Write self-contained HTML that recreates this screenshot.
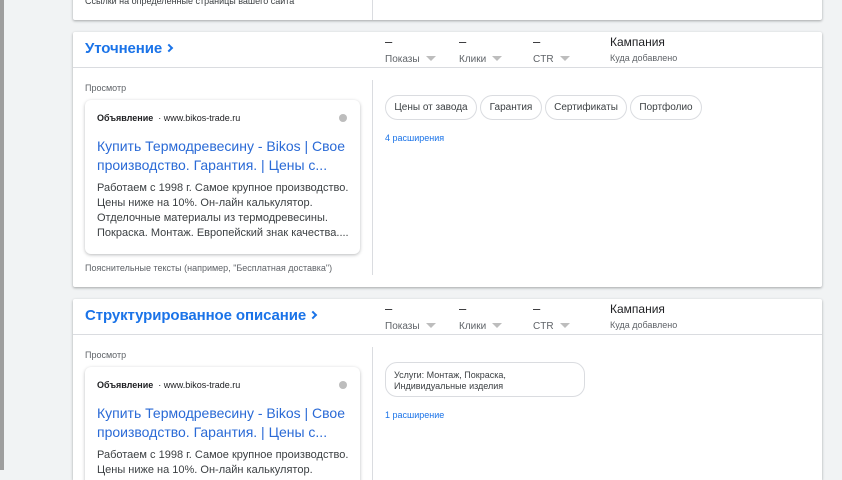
<!DOCTYPE html>
<html><head><meta charset="utf-8"><style>
*{margin:0;padding:0;box-sizing:border-box}
html,body{width:842px;height:480px;overflow:hidden}
body{background:#f1f3f4;font-family:"Liberation Sans",Arial,sans-serif;position:relative;color:#3c4043}
.strip{position:absolute;left:0;top:0;width:4px;height:470px;background:#9e9e9e}
.card{position:absolute;left:73px;width:749px;background:#fff;box-shadow:0 1px 2px rgba(60,64,67,.3),0 1px 3px rgba(60,64,67,.15);border-radius:2px;overflow:hidden}
.ab{position:absolute;white-space:nowrap}
.title{font-size:15px;color:#1a73e8;font-weight:bold;letter-spacing:-.1px}
.chev{display:inline-block;width:6px;height:6px;border-right:2px solid #1a73e8;border-top:2px solid #1a73e8;transform:rotate(45deg);margin-left:4px;vertical-align:2px}
.dash{font-size:13px;color:#202124}
.mh{font-size:10px;color:#5f6368}
.tri{display:inline-block;width:0;height:0;border-left:5px solid transparent;border-right:5px solid transparent;border-top:5px solid #bdbdbd;margin-left:6px;vertical-align:1px}
.hline{position:absolute;left:0;right:0;height:1px;background:#dadce0}
.vline{position:absolute;left:299px;width:1px;background:#dadce0}
.small{font-size:9px;color:#5f6368}
.ad{position:absolute;left:12px;width:275px;border-radius:6px;box-shadow:0 1px 3px rgba(60,64,67,.35);background:#fff}
.ad .lbl{position:absolute;left:12px;top:13px;font-size:9px;color:#202124;white-space:nowrap}
.ad .lbl b{font-weight:bold}
.ad .dot{position:absolute;right:13px;top:14px;width:8px;height:8px;border-radius:50%;background:#bdbdbd}
.ad .h{position:absolute;left:12px;top:37px;font-size:14px;line-height:19px;color:#2a6ad6;width:260px}
.ad .d{position:absolute;left:12px;top:81px;font-size:11px;line-height:15px;color:#3c4043;width:262px}
.chip{position:absolute;top:0;height:25px;border:1px solid #dadce0;border-radius:13px;font-size:10px;color:#3c4043;line-height:23px;text-align:center}
.link{font-size:9px;color:#1a73e8}
</style></head><body>
<div class="strip"></div>
<div class="card" style="top:-10px;height:30px">
<div class="ab small" style="left:12px;top:6px;color:#3c4043">Ссылки на определенные страницы вашего сайта</div>
<div class="vline" style="top:0;height:30px"></div>
</div>

<div class="card" style="top:32px;height:255px">
<div class="ab title" style="left:12px;top:8px">Уточнение<span class="chev"></span></div>
<div class="ab dash" style="left:312px;top:2px">–</div><div class="ab mh" style="left:312px;top:22px">Показы<span class="tri"></span></div>
<div class="ab dash" style="left:386px;top:2px">–</div><div class="ab mh" style="left:386px;top:22px">Клики<span class="tri"></span></div>
<div class="ab dash" style="left:460px;top:2px">–</div><div class="ab mh" style="left:460px;top:22px">CTR<span class="tri"></span></div>
<div class="ab" style="left:537px;top:3px;font-size:12px;color:#202124">Кампания</div><div class="ab mh" style="left:537px;top:21px;font-size:9px">Куда добавлено</div>
<div class="hline" style="top:35px"></div>
<div class="vline" style="top:48px;height:195px"></div>
<div class="ab small" style="left:12px;top:51px">Просмотр</div>
<div class="ad" style="top:68px;height:154px">
<div class="lbl"><b>Объявление</b> &nbsp;· www.bikos-trade.ru</div><div class="dot"></div>
<div class="h">Купить Термодревесину - Bikos | Свое производство. Гарантия. | Цены с...</div>
<div class="d">Работаем с 1998 г. Самое крупное производство. Цены ниже на 10%. Он-лайн калькулятор. Отделочные материалы из термодревесины. Покраска. Монтаж. Европейский знак качества....</div>
</div>
<div class="ab small" style="left:12px;top:231px">Пояснительные тексты (например, "Бесплатная доставка")</div>
<div class="ab" style="left:312px;top:63px;width:420px;height:26px">
<div class="chip" style="left:0;width:92px">Цены от завода</div>
<div class="chip" style="left:95px;width:62px">Гарантия</div>
<div class="chip" style="left:160px;width:82px">Сертификаты</div>
<div class="chip" style="left:245px;width:72px">Портфолио</div>
</div>
<div class="ab link" style="left:312px;top:101px">4 расширения</div>
</div>

<div class="card" style="top:299px;height:181px;border-radius:2px 2px 0 0">
<div class="ab title" style="left:12px;top:8px">Структурированное описание<span class="chev"></span></div>
<div class="ab dash" style="left:312px;top:2px">–</div><div class="ab mh" style="left:312px;top:22px">Показы<span class="tri"></span></div>
<div class="ab dash" style="left:386px;top:2px">–</div><div class="ab mh" style="left:386px;top:22px">Клики<span class="tri"></span></div>
<div class="ab dash" style="left:460px;top:2px">–</div><div class="ab mh" style="left:460px;top:22px">CTR<span class="tri"></span></div>
<div class="ab" style="left:537px;top:3px;font-size:12px;color:#202124">Кампания</div><div class="ab mh" style="left:537px;top:21px;font-size:9px">Куда добавлено</div>
<div class="hline" style="top:35px"></div>
<div class="vline" style="top:48px;height:150px"></div>
<div class="ab small" style="left:12px;top:51px">Просмотр</div>
<div class="ad" style="top:68px;height:154px">
<div class="lbl"><b>Объявление</b> &nbsp;· www.bikos-trade.ru</div><div class="dot"></div>
<div class="h">Купить Термодревесину - Bikos | Свое производство. Гарантия. | Цены с...</div>
<div class="d">Работаем с 1998 г. Самое крупное производство. Цены ниже на 10%. Он-лайн калькулятор. Отделочные материалы из термодревесины.</div>
</div>
<div class="ab" style="left:312px;top:63px;width:200px;height:35px;border:1px solid #dadce0;border-radius:12px;font-size:9px;line-height:11px;padding:7px 8px;color:#3c4043;white-space:normal">Услуги: Монтаж, Покраска, Индивидуальные изделия</div>
<div class="ab link" style="left:312px;top:111px">1 расширение</div>
</div>
</body></html>
